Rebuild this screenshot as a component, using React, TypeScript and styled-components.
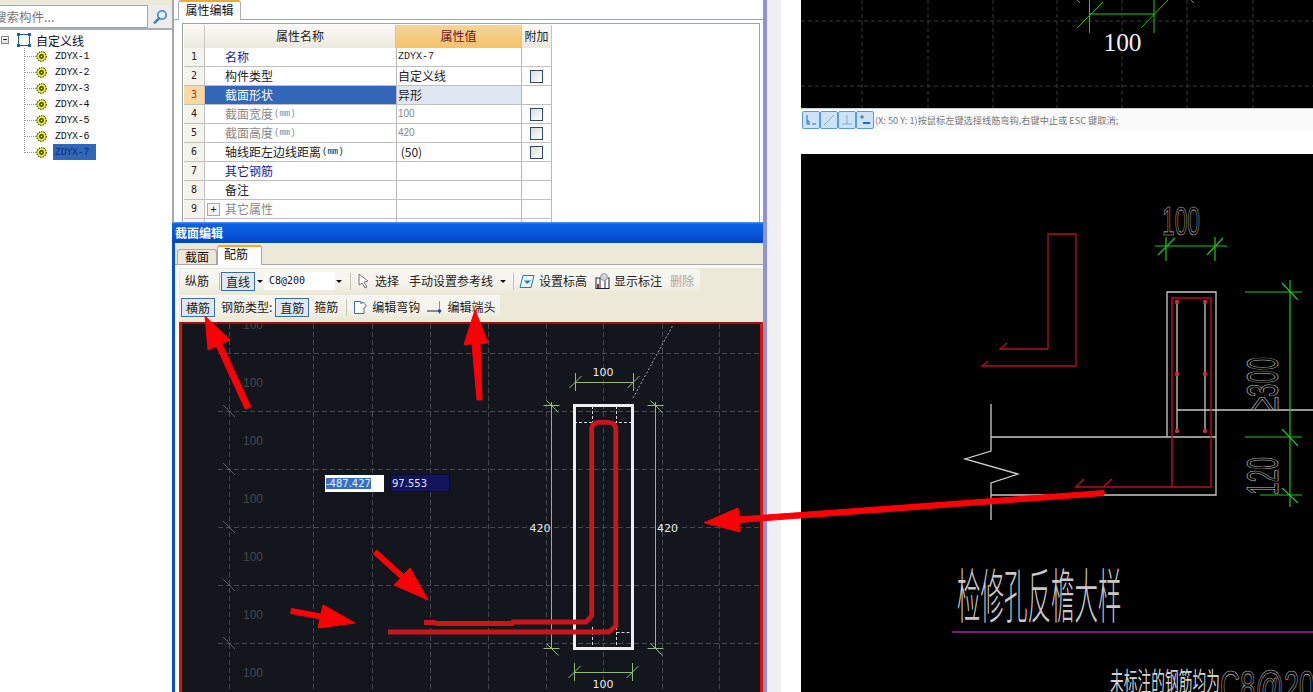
import React from "react";
import styled, { createGlobalStyle } from "styled-components";

const Global = createGlobalStyle`
  html, body { margin: 0; padding: 0; background: #fff; }
  body { font-family: "Noto Sans CJK SC", "Liberation Sans", sans-serif; font-size: 12px; color: #111; }
`;

const Page = styled.div`
  position: relative;
  width: 1313px;
  height: 692px;
  overflow: hidden;
  display: flex;
  background: #fff;
`;

const AppArea = styled.div`
  position: relative;
  width: 767px;
  height: 692px;
  box-sizing: border-box;
  display: flex;
  flex-shrink: 0;
  background: #fff;
  border-right: 4px solid #8f92d8;
`;

const Sidebar = styled.aside`
  width: 174px;
  flex-shrink: 0;
  box-sizing: border-box;
  background: #fff;
  border-right: 2px solid #a8a8a8;
  display: flex;
  flex-direction: column;
`;

const SearchBar = styled.div`
  height: 30px;
  background: #ece9d8;
  padding-top: 5px;
  display: flex;
  box-sizing: border-box;
  border-bottom: 2px solid #a6aeb6;
`;

const SearchInput = styled.div`
  width: 148px;
  height: 23px;
  background: #fff;
  border: 1px solid #9aa5b0;
  border-left: 0;
  box-sizing: border-box;
  color: #777;
  font-size: 12.5px;
  line-height: 21px;
  text-indent: -6px;
  overflow: hidden;
  white-space: nowrap;
`;

const SearchButton = styled.div`
  flex: 1;
  display: flex;
  align-items: center;
  justify-content: center;
  background: #ececec;
`;

const Tree = styled.div`
  padding-top: 2px;
`;

const TreeRoot = styled.div`
  height: 16px;
  display: flex;
  align-items: center;
  padding-left: 1px;
`;

const Expander = styled.span`
  position: relative;
  width: 6px;
  height: 6px;
  border: 1px solid #888;
  background: linear-gradient(#fff, #ddd);
  &::after {
    content: "";
    position: absolute;
    left: 1px;
    right: 1px;
    top: 2px;
    height: 1px;
    background: #222;
  }
`;

const RootSvg = styled.svg`
  margin: 0 5px 0 8px;
  display: block;
`;

const TreeRows = styled.div`
  margin-left: 24px;
  border-left: 1px dotted #999;
  height: 105px;
`;

const TreeRow = styled.div`
  height: 16px;
  display: flex;
  align-items: center;
  &::before {
    content: "";
    width: 11px;
    border-top: 1px dotted #999;
  }
`;

const TreeLabel = styled.span<{ $selected?: boolean }>`
  margin-left: 6px;
  padding-left: 2px;
  width: 43px;
  box-sizing: border-box;
  height: 16px;
  line-height: 17px;
  font-family: "Liberation Mono", monospace;
  font-size: 10px;
  letter-spacing: -0.3px;
  color: ${(p) => (p.$selected ? "#12306b" : "#111")};
  background: ${(p) => (p.$selected ? "#3166b8" : "transparent")};
`;

const PropertyPane = styled.section`
  flex: 1;
  background: #fff;
  min-width: 0;
  display: flex;
  flex-direction: column;
`;

const TabStrip = styled.div`
  height: 20px;
  padding-left: 4px;
  border-bottom: 1px solid #9aa5a8;
  display: flex;
  box-sizing: border-box;
`;

const PropTab = styled.div`
  width: 63px;
  height: 20px;
  box-sizing: border-box;
  border: 1px solid #a8b0b0;
  border-top: 2px solid #f0a830;
  border-bottom: 0;
  border-radius: 3px 3px 0 0;
  background: #fff;
  text-align: center;
  line-height: 16px;
`;

const GridWrap = styled.div`
  margin: 3px 3px 0 8px;
  border: 1px solid #9aa5a8;
  border-bottom: 0;
  flex: 1;
  padding: 1px 0 0 1px;
  overflow: hidden;
`;

const PropGrid = styled.div`
  display: grid;
  grid-template-columns: 21px 191px 126px 30px;
  grid-template-rows: 23px;
  grid-auto-rows: 19px;
  width: 368px;
`;

const HeadCell = styled.div<{ $active?: boolean }>`
  text-align: center;
  line-height: 21px;
  color: ${(p) => (p.$active ? "#6b0f2b" : "#222")};
  background: ${(p) =>
    p.$active ? "linear-gradient(#f3d69c, #f6c066)" : "linear-gradient(#fbfaf6, #ebe8dc)"};
  border-right: 1px solid #c8c8c0;
  box-sizing: border-box;
`;

const NumCell = styled.div<{ $active?: boolean }>`
  text-align: center;
  line-height: 18px;
  font-family: "DejaVu Sans Mono", monospace;
  font-size: 10px;
  color: ${(p) => (p.$active ? "#a33" : "#222")};
  background: ${(p) => (p.$active ? "#fad9a0" : "#f4f3ec")};
  border-right: 1px solid #c0c0c0;
  border-bottom: 1px solid #c0c0c0;
  box-sizing: border-box;
`;

const NameCell = styled.div<{ $tone?: string; $active?: boolean }>`
  padding-left: 20px;
  line-height: 18px;
  color: ${(p) => (p.$active ? "#fff" : p.$tone ?? "#222")};
  background: ${(p) => (p.$active ? "#3166b8" : "#fff")};
  border-bottom: 1px solid #c0c0c0;
  box-sizing: border-box;
  display: flex;
  align-items: center;
  white-space: nowrap;
`;

const Unit = styled.span`
  font-family: "Liberation Mono", monospace;
  font-size: 9px;
  margin-left: 1px;
`;

const ValueCell = styled.div<{ $active?: boolean; $muted?: boolean; $mono?: boolean }>`
  padding-left: 1px;
  line-height: 18px;
  white-space: pre;
  font-family: ${(p) =>
    p.$mono ? '"Liberation Mono", monospace' : p.$muted ? '"Liberation Sans", sans-serif' : "inherit"};
  font-size: ${(p) => (p.$mono || p.$muted ? "10px" : "12px")};
  color: ${(p) => (p.$muted ? "#888" : "#222")};
  background: ${(p) => (p.$active ? "#dfe7f3" : "#fff")};
  border-left: 1px solid #b8b8b8;
  border-right: 1px solid #b8b8b8;
  border-bottom: 1px solid #c0c0c0;
  box-sizing: border-box;
`;

const ExtraCell = styled.div`
  border-right: 1px solid #b8b8b8;
  border-bottom: 1px solid #c0c0c0;
  box-sizing: border-box;
  display: flex;
  align-items: center;
  justify-content: center;
`;

const Check = styled.span`
  width: 13px;
  height: 13px;
  box-sizing: border-box;
  border: 1px solid #2d4a6a;
  background: linear-gradient(135deg, #dcdcd6, #fff);
`;

const PlusBox = styled.span`
  width: 11px;
  height: 11px;
  margin: 0 5px 0 -18px;
  border: 1px solid #aaa;
  background: #f2f2f2;
  color: #222;
  font: 11px/10px "Liberation Sans", sans-serif;
  text-align: center;
`;

const Dialog = styled.section`
  position: absolute;
  left: 172px;
  top: 222px;
  width: 591px;
  height: 470px;
  background: #ece9d8;
  border-left: 3px solid #0a4fd0;
  box-sizing: border-box;
  display: flex;
  flex-direction: column;
`;

const TitleBar = styled.header`
  height: 21px;
  margin-left: -3px;
  padding: 3px 0 0 3px;
  box-sizing: border-box;
  background: linear-gradient(#5d9cf0 0, #0a62e4 10%, #0a55da 60%, #0244c0 100%);
  color: #fff;
  font-weight: 700;
  font-size: 12px;
  line-height: 15px;
`;

const DialogTabs = styled.div`
  height: 22px;
  padding-left: 2px;
  display: flex;
  align-items: flex-end;
  border-bottom: 1px solid #a8a8a8;
  box-sizing: border-box;
`;

const DialogTab = styled.div<{ $active?: boolean }>`
  height: ${(p) => (p.$active ? 20 : 15)}px;
  width: ${(p) => (p.$active ? 45 : 40)}px;
  margin-bottom: ${(p) => (p.$active ? -1 : 0)}px;
  padding-right: ${(p) => (p.$active ? 7 : 0)}px;
  box-sizing: border-box;
  text-align: center;
  line-height: 13px;
  border: 1px solid #a8a8a8;
  border-top: ${(p) => (p.$active ? "2px solid #f0a830" : "1px solid #a8a8a8")};
  border-bottom: 0;
  border-radius: 3px 3px 0 0;
  background: ${(p) => (p.$active ? "#fff" : "#ece9d8")};
`;

const TabPage = styled.div`
  flex: 1;
  min-height: 0;
  display: flex;
  flex-direction: column;
  border-top: 3px solid #fafafa;
  border-left: 4px solid #fff;
`;

const ToolArea = styled.div`
  padding: 1px 0 3px 1px;
  display: flex;
  flex-direction: column;
  gap: 2px;
`;

const ToolRow = styled.div<{ $width: number }>`
  height: 24px;
  width: ${(p) => p.$width}px;
  display: flex;
  align-items: center;
  background: linear-gradient(#f7f6f1 0, #f4f3ec 60%, #ece9d8 100%);
  white-space: nowrap;
`;

const ToolText = styled.span<{ $ml?: number; $muted?: boolean }>`
  margin-left: ${(p) => p.$ml ?? 0}px;
  line-height: 18px;
  color: ${(p) => (p.$muted ? "#aaa" : "#222")};
`;

const ToolBtn = styled.span<{ $ml?: number }>`
  margin-left: ${(p) => p.$ml ?? 0}px;
  width: 34px;
  height: 19px;
  box-sizing: border-box;
  text-align: center;
  line-height: 17px;
  color: #222;
  border: 1px solid #3a6ea5;
  background: #dfe7f0;
`;

const Caret = styled.span<{ $ml?: number }>`
  margin-left: ${(p) => p.$ml ?? 0}px;
  width: 0;
  height: 0;
  border: 3px solid transparent;
  border-top: 3px solid #111;
  border-bottom: 0;
`;

const ToolSep = styled.span<{ $ml?: number }>`
  margin-left: ${(p) => p.$ml ?? 0}px;
  width: 1px;
  height: 17px;
  background: #c4c2b4;
`;

const ToolIcon = styled.svg<{ $ml?: number }>`
  margin-left: ${(p) => p.$ml ?? 0}px;
  display: block;
  flex-shrink: 0;
`;

const ComboText = styled.span`
  margin-left: 1px;
  width: 71px;
  box-sizing: border-box;
  padding-left: 5px;
  background: #fff;
  font-family: "DejaVu Sans Mono", monospace;
  font-size: 10px;
  line-height: 18px;
`;

const CanvasFrame = styled.div`
  flex: 1;
  min-height: 0;
  width: 584px;
  border: 3px solid #e0120c;
  border-top: 2px solid #a01010;
  border-bottom: 0;
  box-sizing: border-box;
  background: #14161e;
`;

const CanvasSvg = styled.svg`
  display: block;
`;

const Gutter = styled.div`
  width: 34px;
  flex-shrink: 0;
  background: #fff;
  display: flex;
`;

const GutterStrip = styled.div`
  width: 14px;
  background: #f0f0f2;
`;

const RightColumn = styled.div`
  width: 512px;
  display: flex;
  flex-direction: column;
  flex-shrink: 0;
`;

const CadTop = styled.div`
  height: 108px;
  background: #000;
`;

const PromptBar = styled.div`
  height: 46px;
  background: #fff;
  box-sizing: border-box;
  border-top: 1px solid #ccc;
`;

const PromptInner = styled.div`
  height: 21px;
  padding-left: 1px;
  background: #fafafa;
  display: flex;
  align-items: center;
  color: #777;
  font-size: 9.2px;
  white-space: nowrap;
`;

const SnapBtn = styled.span`
  width: 18px;
  height: 18px;
  box-sizing: border-box;
  border: 1px solid #5b9bd8;
  border-radius: 2px;
  background: #cfe3f8;
  display: flex;
  align-items: center;
  justify-content: center;
`;

const PromptText = styled.span`
  margin-left: 1px;
`;

const CadBottom = styled.div`
  flex: 1;
  background: #000;
`;

const ArrowLayer = styled.svg`
  position: absolute;
  left: 0;
  top: 0;
  pointer-events: none;
`;

const CoordBox = styled.div<{ $dark?: boolean }>`
  position: absolute;
  top: ${(p) => (p.$dark ? 474 : 475)}px;
  left: ${(p) => (p.$dark ? 390 : 325)}px;
  width: ${(p) => (p.$dark ? 60 : 59)}px;
  height: ${(p) => (p.$dark ? 18 : 17)}px;
  box-sizing: border-box;
  font-family: "DejaVu Sans", sans-serif;
  font-size: 10px;
  line-height: 17px;
  padding-left: 1px;
  background: ${(p) => (p.$dark ? "#14145c" : "#fff")};
  color: #dfe4ff;
  border: ${(p) => (p.$dark ? "1px solid #0a0a30" : "0")};
`;

const Selected = styled.span`
  background: #3a6fc0;
  color: #e8f0ff;
`;

const rows = [
  { n: 1, name: "名称", tone: "#1a1a9c", value: "ZDYX-7", mono: true },
  { n: 2, name: "构件类型", value: "自定义线", check: true },
  { n: 3, name: "截面形状", value: "异形", active: true },
  { n: 4, name: "截面宽度", unit: "(mm)", tone: "#888", value: "100", muted: true, check: true },
  { n: 5, name: "截面高度", unit: "(mm)", tone: "#888", value: "420", muted: true, check: true },
  { n: 6, name: "轴线距左边线距离", unit: "(mm)", value: " (50)", check: true },
  { n: 7, name: "其它钢筋", tone: "#1a1a9c", value: "" },
  { n: 8, name: "备注", value: "" },
  { n: 9, name: "其它属性", tone: "#888", value: "", plus: true },
];

const Gear = () => (
  <svg width="11" height="11" viewBox="0 0 12 12">
    <circle cx="6" cy="6" r="5.2" fill="#f3e82a" stroke="#3a3a10" strokeWidth="1.2" strokeDasharray="1.6 1" />
    <circle cx="6" cy="6" r="2.6" fill="#2a4a18" />
    <circle cx="6" cy="6" r="1" fill="#f3e82a" />
  </svg>
);

const RootIcon = () => (
  <RootSvg width="14" height="14" viewBox="0 0 14 14">
    <rect x="1.5" y="1.5" width="11" height="11" fill="none" stroke="#1f5fa8" strokeWidth="1" />
    {[[0, 0], [11, 0], [0, 11], [11, 11]].map(([x, y]) => (
      <rect key={`${x}${y}`} x={x} y={y} width="3" height="3" fill="#1f5fa8" />
    ))}
  </RootSvg>
);

const GRID_Y = [29, 87, 145, 203, 261, 319];
const GRID_X = [47, 131, 190, 248, 306, 364, 421, 480, 537];
const TICK_Y = [87, 145, 203, 261, 319];
const LABEL_Y = [5, 63, 121, 179, 237, 295, 353];
const DIM = "#8fbc7c";

const Tick = ({ x, y }: { x: number; y: number }) => (
  <path d={`M${x - 8} ${y}H${x + 8}M${x - 5} ${y - 5}L${x + 7} ${y + 7}`} stroke={DIM} strokeWidth="1" fill="none" />
);

const HTick = ({ x, y }: { x: number; y: number }) => (
  <path d={`M${x} ${y - 9}V${y + 9}M${x - 6} ${y + 6}L${x + 6} ${y - 6}`} stroke={DIM} strokeWidth="1" fill="none" />
);

const Section = () => (
  <CanvasSvg width="578" height="368" viewBox="0 0 578 368">
    <g stroke="#44474e" strokeWidth="1" strokeDasharray="5 3" fill="none">
      {GRID_Y.map((y) => (
        <path key={y} d={`M36 ${y + 0.5}H578`} />
      ))}
      {GRID_X.map((x) => (
        <path key={x} d={`M${x + 0.5} 0V368`} />
      ))}
    </g>
    <g stroke="#5a5d64" fill="none" strokeWidth="1">
      {TICK_Y.map((y) => (
        <path key={y} d={`M41 ${y - 6}L53 ${y + 6}`} />
      ))}
    </g>
    <g fill="#44474e" fontFamily="Liberation Sans, sans-serif" fontSize="12">
      {LABEL_Y.map((y) => (
        <text key={y} x="61" y={y}>100</text>
      ))}
    </g>
    <path d="M451 74L491 1" stroke="#a9aaac" strokeWidth="1" strokeDasharray="2 2" fill="none" />
    <path
      d="M392 98.5H451M410.5 82V98M434.5 82V98M410.5 303V325M434.5 303V325M434.5 308.5H451"
      stroke="#d8d9dc"
      strokeWidth="1"
      strokeDasharray="3 2"
      fill="none"
    />
    <rect x="392.5" y="81.5" width="58" height="243" fill="none" stroke="#eeeef0" strokeWidth="3" />
    <g stroke={DIM} strokeWidth="1" fill="none">
      <path d="M393 58.5H451" />
      <path d="M393 348.5H451" />
      <path d="M369.5 78V324" />
      <path d="M473.5 78V324" />
    </g>
    <HTick x={393.5} y={58} />
    <HTick x={451.5} y={58} />
    <HTick x={392.5} y={348} />
    <HTick x={450.5} y={348} />
    <Tick x={369.5} y={81.5} />
    <Tick x={473.5} y={81.5} />
    <Tick x={369.5} y={324.5} />
    <Tick x={473.5} y={324.5} />
    <g fill="#e8e8ea" fontFamily="DejaVu Sans, sans-serif" fontSize="11" textAnchor="middle">
      <text x="421" y="52">100</text>
      <text x="421" y="364">100</text>
      <text x="358" y="208">420</text>
      <text x="485.5" y="208">420</text>
    </g>
    <path
      d="M242 298.5H252L255 299.5H330L331 298H404L409.7 292V106Q409.7 98.3 417 98.3H426Q433.8 98.3 433.8 106V302L427 308H206"
      stroke="#c8161f"
      strokeWidth="4.8"
      fill="none"
    />
  </CanvasSvg>
);

const TopCad = () => (
  <CanvasSvg width="512" height="108" viewBox="0 0 512 108">
    <g stroke="#3a3a3a" strokeWidth="1" strokeDasharray="4 3" fill="none">
      <path d="M0 21H512M0 86H512" />
      {[61, 127, 192, 256, 321, 386, 452].map((x) => (
        <path key={x} d={`M${x} 0V108`} />
      ))}
    </g>
    <path
      d="M288.5 14H353M288.5 0V33M353 0V33M276 28L302 2M340 28L367 0M390 0L393 3M276 0L279 3"
      stroke="#22c422"
      strokeWidth="1"
      fill="none"
    />
    <text x="321.5" y="51" textAnchor="middle" fill="#f2f2f2" fontFamily="Liberation Serif, serif" fontSize="26" textLength="38" lengthAdjust="spacingAndGlyphs">100</text>
  </CanvasSvg>
);

const OUTLINE = { fill: "#000", stroke: "#c4c4c4", strokeWidth: 0.7, fontFamily: "Liberation Sans, sans-serif" };

const BottomCad = () => (
  <CanvasSvg width="512" height="538" viewBox="0 0 512 538">
    <g stroke="#b01020" strokeWidth="1.3" fill="none">
      <path d="M247 195V80H275V212H181L187 207" />
      <path d="M247 195H199L206 189" />
    </g>
    <g stroke="#c9c9c9" strokeWidth="1.3" fill="none">
      <path d="M366 283V138H415V341H190M190 283H415" />
      <path d="M190 250V297L164 305L217 320L190 329V366" />
      <path d="M376 146V276M404 146V276M376 256H512" />
    </g>
    <g stroke="#b01020" strokeWidth="1.5" fill="none">
      <path d="M371 333V144H410V333H275L283 325M302 333L311 325" />
    </g>
    <g fill="#c03040">
      {[[376, 148], [404, 148], [376, 220], [404, 220], [376, 277], [404, 277]].map(([x, y]) => (
        <circle key={`${x}${y}`} cx={x} cy={y} r="2.2" />
      ))}
    </g>
    <g stroke="#1ec41e" strokeWidth="1.2" fill="none">
      <path d="M354 92H426M365 83V107M414 83V107M357 101L374 84M406 101L422 84" />
      <path d="M489 126V353M444 138H501M444 283H501M459 341H501M481 129L497 146M481 275L497 292M481 334L497 349" />
    </g>
    <text x="361" y="81" fontSize="41" textLength="38" lengthAdjust="spacingAndGlyphs" {...OUTLINE}>100</text>
    <text transform="translate(477 256) rotate(-90)" fontSize="44" textLength="53" lengthAdjust="spacingAndGlyphs" {...OUTLINE}>≥300</text>
    <text transform="translate(477 341) rotate(-90)" fontSize="44" textLength="38" lengthAdjust="spacingAndGlyphs" {...OUTLINE}>120</text>
    <text
      transform="translate(156 464) scale(1 2.5)"
      fontFamily="Noto Sans CJK SC, sans-serif"
      fontSize="23.5"
      fontWeight="300"
      fill="#c8c8c8"
    >
      检修孔反檐大样
    </text>
    <path d="M151 478H512" stroke="#7a1a80" strokeWidth="2" />
    <text
      transform="translate(309 537) scale(1 1.9)"
      fontFamily="Noto Sans CJK SC, sans-serif"
      fontSize="13.75"
      fill="#d0d0d0"
    >
      未标注的钢筋均为
    </text>
    <text x="419" y="548" fontSize="44" textLength="110" lengthAdjust="spacingAndGlyphs" {...OUTLINE}>C8@200</text>
  </CanvasSvg>
);

const Arrow = ({ d }: { d: string }) => (
  <path d={d} fill="#fb0007" stroke="#fb0007" strokeWidth="1" strokeLinejoin="round" />
);

export default function App() {
  return (
    <Page>
      <Global />
      <AppArea>
        <Sidebar>
          <SearchBar>
            <SearchInput>搜索构件...</SearchInput>
            <SearchButton>
              <svg width="15" height="15" viewBox="0 0 15 15">
                <circle cx="9" cy="6" r="4.2" fill="#e6f2fa" stroke="#4a8fc0" strokeWidth="1.8" />
                <path d="M6 9.4L1.8 13.6" stroke="#3a7fb5" strokeWidth="2.4" strokeLinecap="round" />
              </svg>
            </SearchButton>
          </SearchBar>
          <Tree>
            <TreeRoot>
              <Expander />
              <RootIcon />
              自定义线
            </TreeRoot>
            <TreeRows>
              {[1, 2, 3, 4, 5, 6, 7].map((i) => (
                <TreeRow key={i}>
                  <Gear />
                  <TreeLabel $selected={i === 7}>ZDYX-{i}</TreeLabel>
                </TreeRow>
              ))}
            </TreeRows>
          </Tree>
        </Sidebar>
        <PropertyPane>
          <TabStrip>
            <PropTab>属性编辑</PropTab>
          </TabStrip>
          <GridWrap>
            <PropGrid>
              <HeadCell />
              <HeadCell>属性名称</HeadCell>
              <HeadCell $active>属性值</HeadCell>
              <HeadCell>附加</HeadCell>
              {rows.map((r) => (
                <React.Fragment key={r.n}>
                  <NumCell $active={r.active}>{r.n}</NumCell>
                  <NameCell $tone={r.tone} $active={r.active}>
                    {r.plus && <PlusBox>+</PlusBox>}
                    {r.name}
                    {r.unit && <Unit>{r.unit}</Unit>}
                  </NameCell>
                  <ValueCell $active={r.active} $muted={r.muted} $mono={r.mono}>{r.value}</ValueCell>
                  <ExtraCell>{r.check && <Check />}</ExtraCell>
                </React.Fragment>
              ))}
              <NumCell />
              <NameCell />
              <ValueCell />
              <ExtraCell />
            </PropGrid>
          </GridWrap>
        </PropertyPane>
        <Dialog>
          <TitleBar>截面编辑</TitleBar>
          <DialogTabs>
            <DialogTab>截面</DialogTab>
            <DialogTab $active>配筋</DialogTab>
          </DialogTabs>
          <TabPage>
            <ToolArea>
              <ToolRow $width={520}>
                <ToolText $ml={5}>纵筋</ToolText>
                <ToolSep $ml={10} />
                <ToolBtn $ml={1}>直线</ToolBtn>
                <Caret $ml={2} />
                <ComboText>C8@200</ComboText>
                <Caret $ml={1} />
                <ToolSep $ml={8} />
                <ToolIcon $ml={7} width="12" height="16" viewBox="0 0 12 16">
                  <path d="M1 1L1 12L4 10L7 15L9 14L6 9L10 8Z" fill="#fff" stroke="#777" />
                </ToolIcon>
                <ToolText $ml={5}>选择</ToolText>
                <ToolText $ml={10}>手动设置参考线</ToolText>
                <Caret $ml={7} />
                <ToolSep $ml={7} />
                <ToolIcon $ml={5} width="16" height="15" viewBox="0 0 16 15">
                  <path d="M4 1.5H15L12 13.5H1Z" fill="#eaf3fb" stroke="#2a78c0" />
                  <path d="M5 6.5H12L8 10Z" fill="#2a78c0" />
                </ToolIcon>
                <ToolText $ml={4}>设置标高</ToolText>
                <ToolIcon $ml={8} width="15" height="16" viewBox="0 0 15 16">
                  <rect x="1" y="5" width="13" height="10.5" fill="#fff" stroke="#223" />
                  <path d="M5 5V15M10 5V15" stroke="#223" />
                  <rect x="2" y="11" width="2" height="4" fill="#a33" />
                  <circle cx="9" cy="4" r="3.4" fill="#cfd6dc" stroke="#99a" />
                </ToolIcon>
                <ToolText $ml={4}>显示标注</ToolText>
                <ToolText $ml={8} $muted>删除</ToolText>
              </ToolRow>
              <ToolRow $width={320}>
                <ToolBtn $ml={1}>横筋</ToolBtn>
                <ToolText $ml={6}>钢筋类型:</ToolText>
                <ToolBtn $ml={3}>直筋</ToolBtn>
                <ToolText $ml={5}>箍筋</ToolText>
                <ToolSep $ml={8} />
                <ToolIcon $ml={6} width="15" height="15" viewBox="0 0 15 15">
                  <path d="M1.5 1.5H8V4L10 2L13.5 6L11 8V13.5H1.5Z" fill="#fff" stroke="#3a6ea5" />
                </ToolIcon>
                <ToolText $ml={4}>编辑弯钩</ToolText>
                <ToolIcon $ml={7} width="16" height="14" viewBox="0 0 16 14">
                  <path d="M0 11H13" stroke="#223" />
                  <path d="M12.5 1V14" stroke="#5b9bd8" strokeWidth="1" />
                  <circle cx="12.5" cy="11" r="1.8" fill="#1a4fa0" />
                </ToolIcon>
                <ToolText $ml={4}>编辑端头</ToolText>
              </ToolRow>
            </ToolArea>
            <CanvasFrame>
              <Section />
            </CanvasFrame>
          </TabPage>
        </Dialog>
        <CoordBox><Selected>-487.427</Selected></CoordBox>
        <CoordBox $dark>97.553</CoordBox>
      </AppArea>
      <Gutter>
        <GutterStrip />
      </Gutter>
      <RightColumn>
        <CadTop>
          <TopCad />
        </CadTop>
        <PromptBar>
          <PromptInner>
            <SnapBtn>
              <svg width="12" height="12" viewBox="0 0 12 12"><path d="M2 1V10H5M7 10H11M2 7H4V10" stroke="#2a6ab0" fill="none" /></svg>
            </SnapBtn>
            <SnapBtn>
              <svg width="12" height="12" viewBox="0 0 12 12"><path d="M1 11L11 1" stroke="#8aa8c8" fill="none" /></svg>
            </SnapBtn>
            <SnapBtn>
              <svg width="12" height="12" viewBox="0 0 12 12"><path d="M6 1V10M1 10H11" stroke="#8aa8c8" fill="none" /></svg>
            </SnapBtn>
            <SnapBtn>
              <svg width="12" height="12" viewBox="0 0 12 12"><path d="M3 1V5M1 3H5" stroke="#2a6ab0" fill="none" /><path d="M4 9H11" stroke="#1a6ad0" strokeWidth="2" /></svg>
            </SnapBtn>
            <PromptText>(X: 50 Y: 1)按鼠标左键选择线筋弯钩,右键中止或 ESC 键取消;</PromptText>
          </PromptInner>
        </PromptBar>
        <CadBottom>
          <BottomCad />
        </CadBottom>
      </RightColumn>
      <ArrowLayer width="1313" height="692" viewBox="0 0 1313 692">
        <Arrow d="M250.7 406.7L221.7 343.7L230 340L205 316L208 350L216.3 346.3L245.3 409.3Z" />
        <Arrow d="M477 400L472 344L464 344.5L475 310L488 343L480 343.5L482 400Z" />
        <Arrow d="M376.7 550.1L403.7 574.6L410 568L428 600L394 585L400.3 578.4L373.3 553.9Z" />
        <Arrow d="M291.5 608.5L321 614L323 605L355 623L318 628L320 619L290.5 613.5Z" />
        <Arrow d="M1104 490.5L739 517L738 508L704 522.7L740 532L739.5 522.5L1104 495.5Z" />
      </ArrowLayer>
    </Page>
  );
}
